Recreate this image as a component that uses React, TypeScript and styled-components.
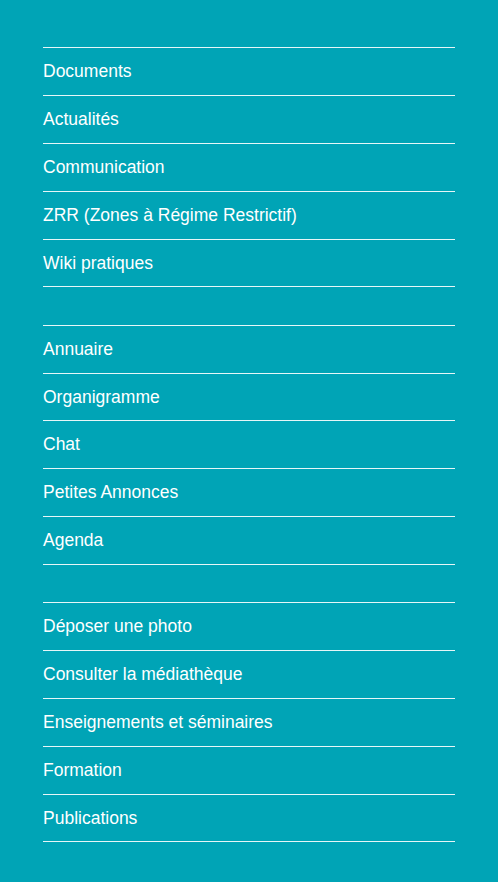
import React from "react";
import styled, { createGlobalStyle } from "styled-components";

const Global = createGlobalStyle`
  html, body { margin: 0; padding: 0; background: #00a4b6; }
  body { font-family: "Liberation Sans", Arial, sans-serif; }
`;

const Page = styled.nav`
  background: #00a4b6;
  min-height: 882px;
  box-sizing: border-box;
  padding: 47.4px 43px 0;
  display: flex;
  flex-direction: column;
  gap: 37.5px;
`;

const Group = styled.ul`
  list-style: none;
  margin: 0;
  padding: 0;
  border-top: 1px solid #e6f6f8;
`;

const Item = styled.li`
  border-bottom: 1px solid #e6f6f8;
`;

const Link = styled.a`
  display: block;
  padding: 13px 0;
  font-size: 17.5px;
  line-height: 20.8px;
  color: #ffffff;
  text-decoration: none;
`;

const groups = [
  ["Documents", "Actualités", "Communication", "ZRR (Zones à Régime Restrictif)", "Wiki pratiques"],
  ["Annuaire", "Organigramme", "Chat", "Petites Annonces", "Agenda"],
  ["Déposer une photo", "Consulter la médiathèque", "Enseignements et séminaires", "Formation", "Publications"],
];

export default function App() {
  return (
    <>
      <Global />
      <Page>
        {groups.map((g, i) => (
          <Group key={i}>
            {g.map((label) => (
              <Item key={label}>
                <Link href="#">{label}</Link>
              </Item>
            ))}
          </Group>
        ))}
      </Page>
    </>
  );
}
